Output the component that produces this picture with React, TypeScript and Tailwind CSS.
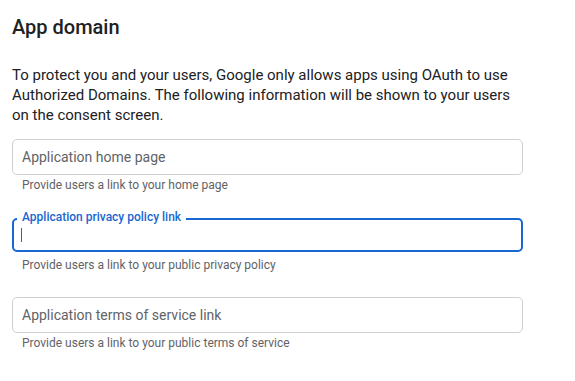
import { useState } from 'react';

interface FieldProps {
  label: string;
  helper: string;
  focused?: boolean;
  className?: string;
}

function OutlinedField({ label, helper, focused, className }: FieldProps) {
  const [value, setValue] = useState('');

  if (focused) {
    return (
      <div className={className}>
        <div className="relative h-[34px] rounded-[5px] border-2 border-[#1967d2]">
          <span className="absolute -top-[11px] left-[3px] bg-white px-[5px] text-[12px] leading-[16px] font-medium text-[#1967d2]">
            {label}
          </span>
          <div className="flex h-full items-center pl-[7px]">
            <span className="h-[14px] w-px bg-[#1967d2]" />
            <input
              value={value}
              onChange={(e) => setValue(e.target.value)}
              className="w-full bg-transparent text-[14px] outline-none"
            />
          </div>
        </div>
        <p className="mt-[5px] pl-[10px] text-[12px] leading-[16px] text-[#5f6368]">{helper}</p>
      </div>
    );
  }

  return (
    <div className={className}>
      <input
        value={value}
        onChange={(e) => setValue(e.target.value)}
        placeholder={label}
        className="block h-[36px] w-full rounded-[5px] border border-[#cfcfcf] px-[9px] text-[14px] text-[#202124] placeholder:text-[#5f6368] outline-none"
      />
      <p className="mt-[2px] pl-[10px] text-[12px] leading-[16px] text-[#5f6368]">{helper}</p>
    </div>
  );
}

export default function App() {
  return (
    <div className="h-[381px] w-[575px] bg-white pl-[12px] font-['Roboto',sans-serif] text-[#202124]">
      <div className="w-[511px]">
        <h2 className="pt-[13px] text-[20px] leading-[28px] font-medium">App domain</h2>
        <p className="mt-[24px] text-[15px] leading-[20px]">
          To protect you and your users, Google only allows apps using OAuth to use Authorized Domains. The
          following information will be shown to your users on the consent screen.
        </p>
        <div className="mt-[14px] flex flex-col">
          <OutlinedField label="Application home page" helper="Provide users a link to your home page" />
          <OutlinedField
            className="mt-[25px]"
            label="Application privacy policy link"
            helper="Provide users a link to your public privacy policy"
            focused
          />
          <OutlinedField
            className="mt-[24px]"
            label="Application terms of service link"
            helper="Provide users a link to your public terms of service"
          />
        </div>
      </div>
    </div>
  );
}
